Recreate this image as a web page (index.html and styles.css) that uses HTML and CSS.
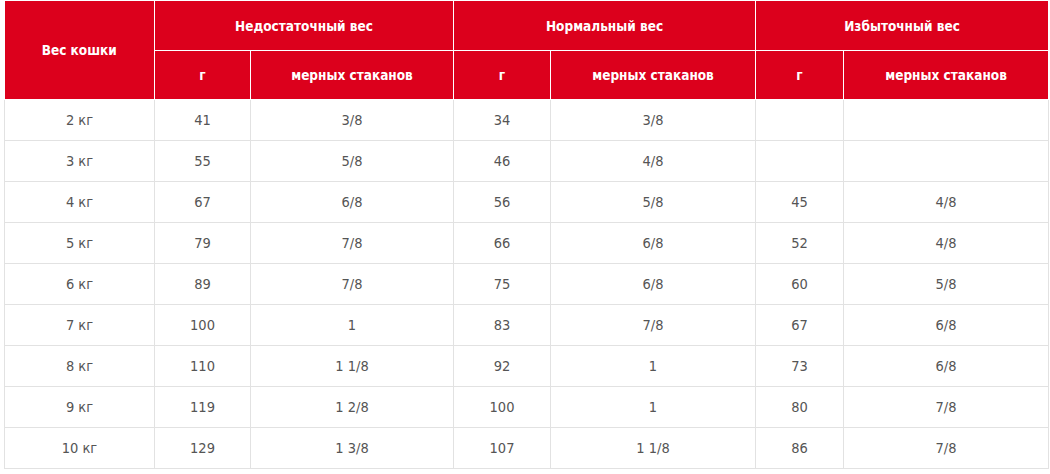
FILE: index.html
```html
<!DOCTYPE html>
<html lang="ru">
<head>
<meta charset="utf-8">
<link rel="stylesheet" href="styles.css">
</head>
<body>
<div class="wrap">
<table class="feed">
  <colgroup>
    <col class="c-w"><col class="c-g"><col class="c-m1"><col class="c-g2"><col class="c-m2"><col class="c-g3"><col class="c-m3">
  </colgroup>
  <thead>
    <tr class="h1">
      <th rowspan="2">Вес кошки</th>
      <th colspan="2">Недостаточный вес</th>
      <th colspan="2">Нормальный вес</th>
      <th colspan="2">Избыточный вес</th>
    </tr>
    <tr class="h2">
      <th>г</th><th>мерных стаканов</th>
      <th>г</th><th>мерных стаканов</th>
      <th>г</th><th>мерных стаканов</th>
    </tr>
  </thead>
  <tbody>
    <tr><td>2 кг</td><td>41</td><td>3/8</td><td>34</td><td>3/8</td><td></td><td></td></tr>
    <tr><td>3 кг</td><td>55</td><td>5/8</td><td>46</td><td>4/8</td><td></td><td></td></tr>
    <tr><td>4 кг</td><td>67</td><td>6/8</td><td>56</td><td>5/8</td><td>45</td><td>4/8</td></tr>
    <tr><td>5 кг</td><td>79</td><td>7/8</td><td>66</td><td>6/8</td><td>52</td><td>4/8</td></tr>
    <tr><td>6 кг</td><td>89</td><td>7/8</td><td>75</td><td>6/8</td><td>60</td><td>5/8</td></tr>
    <tr><td>7 кг</td><td>100</td><td>1</td><td>83</td><td>7/8</td><td>67</td><td>6/8</td></tr>
    <tr><td>8 кг</td><td>110</td><td>1 1/8</td><td>92</td><td>1</td><td>73</td><td>6/8</td></tr>
    <tr><td>9 кг</td><td>119</td><td>1 2/8</td><td>100</td><td>1</td><td>80</td><td>7/8</td></tr>
    <tr><td>10 кг</td><td>129</td><td>1 3/8</td><td>107</td><td>1 1/8</td><td>86</td><td>7/8</td></tr>
  </tbody>
</table>
</div>
</body>
</html>
```
FILE: styles.css
```css
html, body {
  margin: 0;
  padding: 0;
  background: #ffffff;
}
.wrap {
  padding: 1px 2px 0 4px;
}
.feed {
  width: 1044px;
  border-collapse: collapse;
  table-layout: fixed;
  font-family: "DejaVu Sans Condensed", "Liberation Sans Narrow", "Liberation Sans", sans-serif;
  color: #555555;
}
.c-w { width: 150px; }
.c-g { width: 96px; }
.c-m1 { width: 203px; }
.c-g2 { width: 97px; }
.c-m2 { width: 205px; }
.c-g3 { width: 88px; }
.c-m3 { width: 205px; }
.feed th {
  background: #dc001c;
  color: #ffffff;
  font-weight: bold;
  font-size: 13.5px;
  border: 1px solid #ffffff;
  text-align: center;
  vertical-align: middle;
  padding: 0;
}
.feed thead tr:first-child th { border-top: none; }
.feed thead th:first-child { border-left: none; }
.h1 th { height: 49px; }
.h2 th { height: 48px; }
.feed td {
  border: 1px solid #e2e2e2;
  text-align: center;
  vertical-align: middle;
  font-size: 14.5px;
  height: 40px;
  padding: 0;
}
```
